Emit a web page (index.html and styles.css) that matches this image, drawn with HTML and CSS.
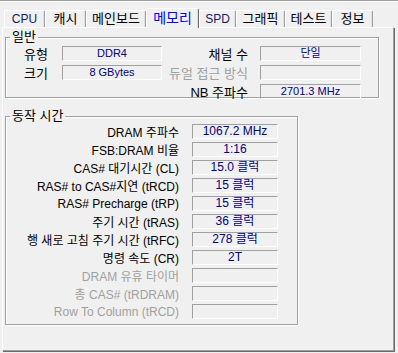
FILE: index.html
```html
<!DOCTYPE html>
<html lang="ko">
<head>
    <meta charset="UTF-8">
    <title>CPU-Z 메모리</title>
    <link rel="stylesheet" href="styles.css">
</head>
<body>
    <div class="window">
        <div class="tab-row">
            <div class="tab latin w41">CPU</div>
            <div class="tab w41">캐시</div>
            <div class="tab w60">메인보드</div>
            <div class="tab active">메모리</div>
            <div class="tab latin w37">SPD</div>
            <div class="tab w49">그래픽</div>
            <div class="tab w47">테스트</div>
            <div class="tab w41">정보</div>
        </div>

        <div class="panel">
            <fieldset class="group general">
                <legend>일반</legend>
                <div class="general-grid">
                    <div class="col">
                        <div class="field">
                            <span class="label left">유형</span>
                            <span class="value">DDR4</span>
                        </div>
                        <div class="field">
                            <span class="label left">크기</span>
                            <span class="value">8 GBytes</span>
                        </div>
                    </div>
                    <div class="col">
                        <div class="field">
                            <span class="label right">채널 수</span>
                            <span class="value wide">단일</span>
                        </div>
                        <div class="field">
                            <span class="label right disabled">듀얼 접근 방식</span>
                            <span class="value wide"></span>
                        </div>
                        <div class="field">
                            <span class="label right">NB 주파수</span>
                            <span class="value wide">2701.3 MHz</span>
                        </div>
                    </div>
                </div>
            </fieldset>

            <fieldset class="group timings">
                <legend>동작 시간</legend>
                <div class="timing-list">
                    <div class="field"><span class="label t">DRAM 주파수</span><span class="value t">1067.2 MHz</span></div>
                    <div class="field"><span class="label t">FSB:DRAM 비율</span><span class="value t">1:16</span></div>
                    <div class="field"><span class="label t">CAS# 대기시간 (CL)</span><span class="value t">15.0 클럭</span></div>
                    <div class="field"><span class="label t">RAS# to CAS#지연 (tRCD)</span><span class="value t">15 클럭</span></div>
                    <div class="field"><span class="label t">RAS# Precharge (tRP)</span><span class="value t">15 클럭</span></div>
                    <div class="field"><span class="label t">주기 시간 (tRAS)</span><span class="value t">36 클럭</span></div>
                    <div class="field"><span class="label t">행 새로 고침 주기 시간 (tRFC)</span><span class="value t">278 클럭</span></div>
                    <div class="field"><span class="label t">명령 속도 (CR)</span><span class="value t">2T</span></div>
                    <div class="field"><span class="label t disabled">DRAM 유휴 타이머</span><span class="value t"></span></div>
                    <div class="field"><span class="label t disabled">총 CAS# (tRDRAM)</span><span class="value t"></span></div>
                    <div class="field"><span class="label t disabled">Row To Column (tRCD)</span><span class="value t"></span></div>
                </div>
            </fieldset>
        </div>
    </div>
</body>
</html>
```

FILE: styles.css
```css
body {
    margin: 0;
    background-color: #f0f0f0;
    font-family: "Liberation Sans", "Noto Sans CJK KR", sans-serif;
    font-size: 12px;
    color: #000;
}

.window {
    width: 398px;
    height: 353px;
    box-sizing: border-box;
    border-top: 1px solid #a0a0a0;
    box-shadow: inset 0 1px 0 #fff;
    padding: 4px 0 0 2px;
}

.tab-row {
    display: flex;
    align-items: flex-end;
    height: 22px;
    padding-left: 2px;
    position: relative;
    z-index: 1;
}

.tab {
    box-sizing: border-box;
    height: 17px;
    line-height: 16px;
    text-align: center;
    border-top: 1px solid #fff;
    border-left: 1px solid #fff;
    border-right: 1px solid #a0a0a0;
    box-shadow: inset -1px 0 0 #e0e0e0;
    border-radius: 2px 2px 0 0;
    font-size: 13px;
    color: #000;
    white-space: nowrap;
}

.tab.w37 { width: 37px; }
.tab.w41 { width: 41px; }
.tab.w47 { width: 47px; }
.tab.w49 { width: 49px; }
.tab.w60 { width: 60px; }

.tab.latin {
    font-size: 12px;
    color: #1a1a60;
}

.tab.active {
    width: 53px;
    height: 20px;
    line-height: 19px;
    color: #0000ff;
    font-size: 14px;
    margin-bottom: -1px;
    background-color: #f0f0f0;
    border-right-color: #696969;
}

.panel {
    width: 392px;
    height: 324px;
    box-sizing: border-box;
    border-top: 1px solid #fff;
    border-left: 1px solid #fff;
    border-right: 1px solid #a0a0a0;
    border-bottom: 1px solid #a0a0a0;
    box-shadow: 1px 1px 0 #696969;
    padding: 2px 14px 0 2px;
}

.group {
    margin: 0;
    padding: 0;
    border: 1px solid #a0a0a0;
    box-shadow: 1px 1px 0 #fff, inset 1px 1px 0 #fff;
}

.group legend {
    padding: 0 2px;
    margin-left: 4px;
    font-size: 13px;
    line-height: 14px;
}

.general {
    height: 68px;
    box-sizing: border-box;
}

.general-grid {
    display: flex;
    padding-top: 2px;
}

.col {
    display: flex;
    flex-direction: column;
    gap: 4px;
}

.field {
    display: flex;
    align-items: center;
    height: 15px;
}

.label {
    white-space: nowrap;
}

.label.left {
    width: 38px;
    padding-left: 18px;
    font-size: 13px;
}

.label.right {
    width: 86px;
    text-align: right;
    padding-right: 12px;
    font-size: 13px;
}

.label.disabled {
    color: #a0a0a0;
}

.value {
    width: 98px;
    height: 13px;
    line-height: 13px;
    border-top: 1px solid #a0a0a0;
    border-left: 1px solid #a0a0a0;
    border-right: 1px solid #fff;
    border-bottom: 1px solid #fff;
    text-align: center;
    color: #000080;
    font-size: 11px;
    overflow: hidden;
    white-space: nowrap;
}

.value.wide {
    width: 99px;
}

.timings {
    margin-top: 11px;
    width: 293px;
    height: 216px;
    box-sizing: border-box;
}

.timing-list {
    display: flex;
    flex-direction: column;
    gap: 3px;
    padding-top: 1px;
}

.label.t {
    width: 173px;
    text-align: right;
    padding-right: 13px;
    font-size: 12px;
}

.value.t {
    width: 84px;
    font-size: 12px;
}
```
